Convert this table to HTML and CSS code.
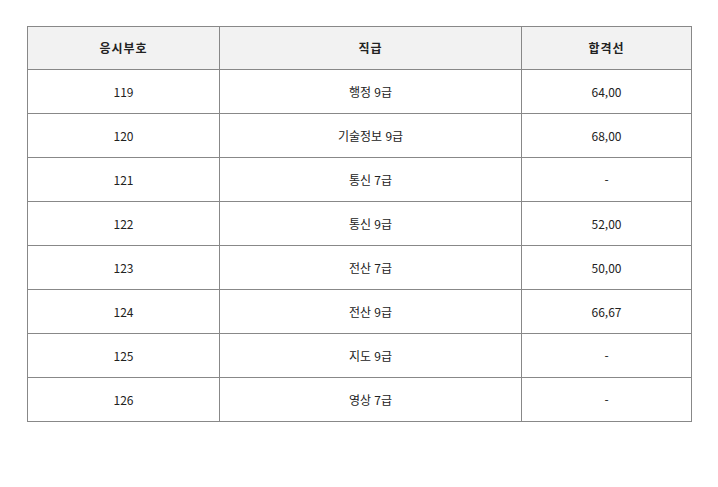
FILE: index.html
```html
<!DOCTYPE html>
<html lang="ko">
<head>
<meta charset="utf-8">
<link rel="stylesheet" href="styles.css">
</head>
<body>
<div class="wrap">
<table class="score">
<colgroup><col class="c1"><col class="c2"><col class="c3"></colgroup>
<thead>
<tr><th>응시부호</th><th>직급</th><th>합격선</th></tr>
</thead>
<tbody>
<tr><td>119</td><td>행정 9급</td><td>64,00</td></tr>
<tr><td>120</td><td>기술정보 9급</td><td>68,00</td></tr>
<tr><td>121</td><td>통신 7급</td><td>-</td></tr>
<tr><td>122</td><td>통신 9급</td><td>52,00</td></tr>
<tr><td>123</td><td>전산 7급</td><td>50,00</td></tr>
<tr><td>124</td><td>전산 9급</td><td>66,67</td></tr>
<tr><td>125</td><td>지도 9급</td><td>-</td></tr>
<tr><td>126</td><td>영상 7급</td><td>-</td></tr>
</tbody>
</table>
</div>
</body>
</html>
```
FILE: styles.css
```css
html, body { margin: 0; padding: 0; background: #fff; }
.wrap { padding: 26px 0 0 27px; }
.score {
  border-collapse: collapse;
  table-layout: fixed;
  width: 665px;
  font-family: "Noto Sans CJK KR", "Noto Sans", sans-serif;
  font-size: 12px;
  color: #222;
}
.c1 { width: 192px; }
.c2 { width: 302px; }
.c3 { width: 170px; }
.score th, .score td {
  border: 1px solid #888;
  text-align: center;
  padding: 0;
  line-height: 16px;
}
.score th {
  height: 42px;
  background: #f2f2f2;
  font-weight: bold;
  color: #222;
  letter-spacing: 1px;
}
.score td { height: 43px; }
```
